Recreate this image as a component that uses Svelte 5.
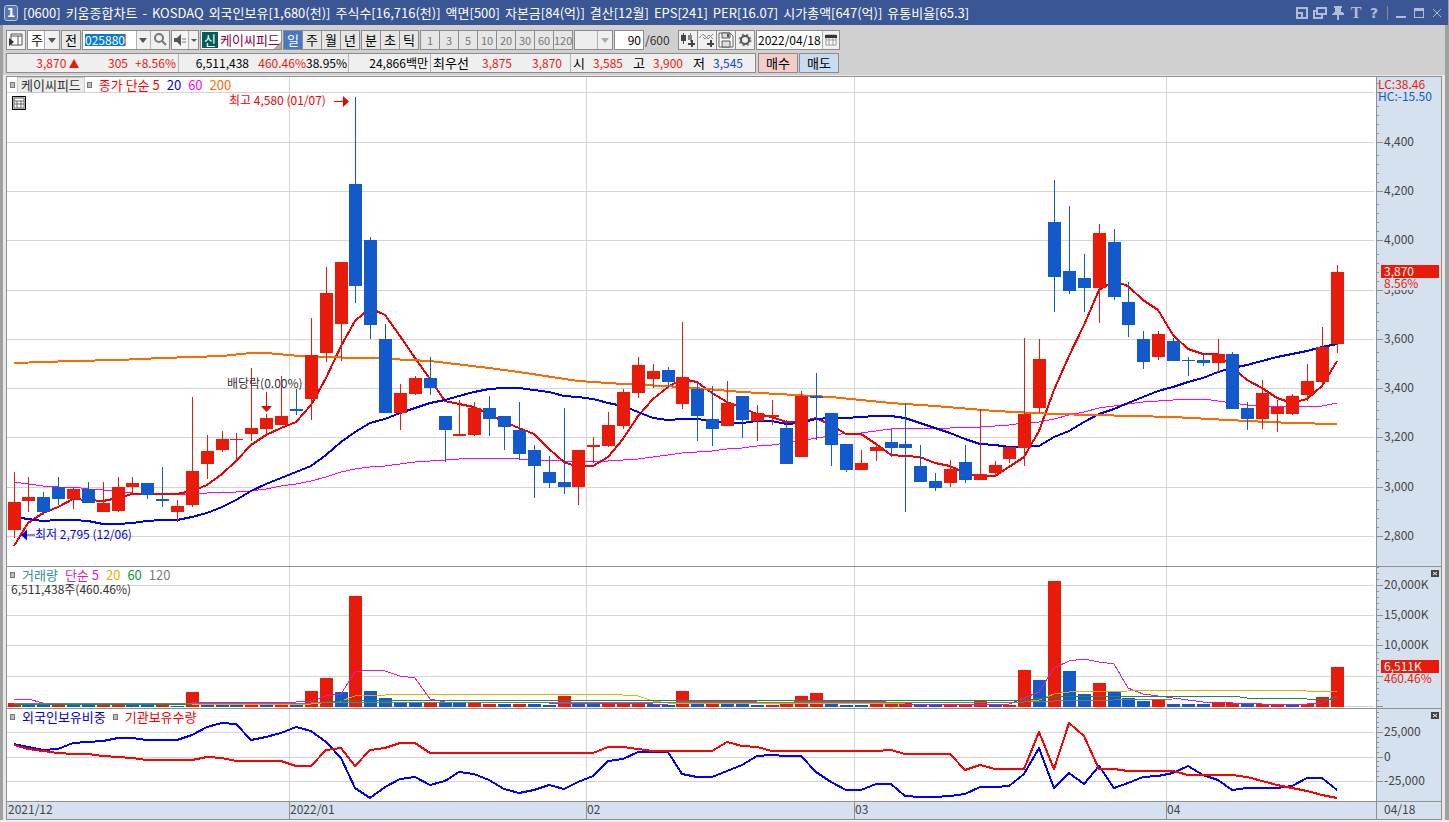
<script lang="ts">
  type Point = number | [number, number]

  const titleParts = [
    '[0600]', '키움종합차트', '-', 'KOSDAQ', '외국인보유[1,680(천)]', '주식수[16,716(천)]', '액면[500]',
    '자본금[84(억)]', '결산[12월]', 'EPS[241]', 'PER[16.07]', '시가총액[647(억)]', '유통비율[65.3]'
  ]
  const periods = ['일', '주', '월', '년']
  const units = ['분', '초', '틱']
  const minutes = ['1', '3', '5', '10', '20', '30', '60', '120']

  let period = $state('일')
  let code = $state('025880')
  let count = $state('90')
  let date = $state('2022/04/18')
  let width = $state(1369)

  // 봉 데이터: 상승 여부, 고가, 몸통 위, 몸통 아래, 저가, 거래량 막대 위, 거래량 상승 여부
  const candles = [
    [1, 472, 502, 530, 538, 703, 1], [1, 477, 497, 501, 512, 705, 0], [0, 492, 497, 512, 515, 705, 0],
    [0, 477, 487, 499, 505, 704, 1], [1, 487, 489, 499, 509, 705, 0], [0, 482, 489, 503, 503, 705, 0],
    [1, 482, 503, 512, 512, 705, 1], [1, 477, 487, 511, 512, 704, 1], [1, 477, 483, 487, 493, 705, 0],
    [0, 483, 483, 495, 499, 705, 0], [0, 467, 499, 501, 507, 705, 1], [1, 500, 506, 512, 522, 706, 0],
    [1, 397, 471, 505, 507, 692, 1], [1, 435, 451, 464, 479, 704, 0], [1, 431, 439, 450, 452, 705, 0],
    [1, 433, 439, 440, 461, 705, 0], [1, 368, 428, 434, 441, 703, 1], [1, 414, 418, 429, 435, 705, 0],
    [1, 376, 416, 425, 425, 705, 1], [0, 389, 409, 411, 415, 705, 0], [1, 318, 355, 399, 420, 691, 1],
    [1, 267, 293, 353, 362, 678, 1], [1, 262, 262, 324, 361, 692, 0], [0, 97, 184, 286, 303, 596, 1],
    [0, 237, 240, 325, 339, 691, 0], [0, 324, 339, 413, 413, 698, 0], [1, 384, 393, 413, 430, 702, 0],
    [1, 376, 378, 394, 395, 703, 0], [0, 357, 378, 388, 395, 702, 1], [0, 416, 416, 430, 462, 703, 0],
    [1, 400, 434, 436, 436, 703, 0], [1, 402, 408, 435, 436, 703, 1], [0, 396, 408, 419, 436, 704, 1],
    [0, 416, 416, 427, 450, 704, 0], [0, 402, 430, 454, 460, 704, 1], [0, 445, 450, 466, 498, 704, 0],
    [0, 456, 472, 483, 488, 705, 0], [0, 408, 482, 487, 494, 696, 1], [1, 450, 450, 487, 505, 704, 0],
    [1, 437, 445, 447, 463, 704, 0], [1, 412, 425, 446, 447, 704, 1], [1, 389, 392, 426, 429, 703, 1],
    [1, 357, 365, 393, 398, 704, 1], [1, 364, 371, 379, 388, 704, 0], [0, 367, 370, 382, 388, 705, 0],
    [1, 322, 377, 404, 409, 691, 1], [0, 383, 389, 416, 441, 703, 0], [0, 386, 419, 429, 446, 703, 1],
    [1, 381, 403, 426, 426, 701, 0], [0, 396, 396, 420, 438, 704, 0], [1, 405, 413, 421, 441, 705, 0],
    [1, 400, 415, 417, 425, 705, 1], [0, 420, 428, 464, 464, 704, 1], [1, 391, 396, 457, 457, 696, 1],
    [0, 373, 396, 398, 440, 693, 1], [0, 413, 413, 445, 466, 703, 0], [0, 444, 444, 470, 472, 705, 0],
    [1, 450, 463, 470, 470, 705, 0], [1, 444, 447, 451, 461, 704, 1], [0, 429, 442, 448, 457, 703, 1],
    [0, 403, 444, 448, 512, 703, 1], [0, 445, 466, 482, 482, 705, 0], [0, 473, 481, 488, 491, 705, 0],
    [1, 460, 469, 483, 487, 704, 1], [0, 445, 462, 480, 483, 705, 1], [1, 409, 474, 480, 480, 701, 1],
    [1, 461, 465, 473, 475, 704, 0], [1, 447, 447, 459, 463, 705, 1], [1, 338, 414, 448, 466, 670, 1],
    [1, 339, 359, 408, 413, 680, 0], [0, 180, 222, 277, 312, 581, 1], [0, 206, 271, 291, 294, 671, 0],
    [0, 254, 278, 288, 312, 694, 0], [1, 224, 233, 288, 323, 683, 1], [0, 229, 242, 297, 300, 692, 0],
    [0, 282, 302, 325, 337, 698, 0], [0, 331, 339, 362, 369, 701, 0], [1, 331, 334, 357, 360, 699, 1],
    [0, 338, 341, 361, 361, 704, 0], [0, 357, 360, 361, 376, 704, 0], [0, 354, 360, 363, 366, 704, 0],
    [1, 339, 354, 363, 372, 703, 1], [0, 352, 354, 409, 409, 703, 1], [0, 402, 408, 419, 430, 704, 0],
    [1, 380, 393, 419, 429, 704, 1], [1, 400, 407, 414, 432, 704, 1], [1, 394, 396, 414, 415, 704, 0],
    [1, 364, 381, 395, 401, 704, 1], [1, 327, 347, 382, 385, 697, 1], [1, 265, 272, 344, 353, 667, 1]
  ]

  // 이동평균선
  const ma5: Point[] = [
    546, 523, 513, 507, 499, 500, 501, 498, 494, 494, 494, 494, 491, 485, 474, 461, 445, 435, 428, 422,
    405, 378, 346, 321, 308, 315, 336, 358, 379, 401, 404, 407, 414, 422, 428, 434, 449, 462, 467, 466,
    457, 439, 416, 399, 387, 379, 382, 393, 402, 408, 414, 417, 422, 422, 418, 425, 434, 434, 444, 455,
    456, 457, 463, 466, 473, 477, 476, 467, 457, 431, 390, 356, 325, 290, 281, 286, 300, 310, 335, 349,
    354, 354, 367, 380, 388, 398, 403, 399, 386, 361
  ]
  const ma20: Point[] = [
    517, 519, 521, 520, 520, 521, 524, 524, 523, 521, 520, 520, 517, 513, 507, 500, 491, 484, 478, 472,
    466, 455, 442, 432, 423, 419, 413, 408, 403, 400, 396, 392, 389, 388, 388, 390, 392, 396, 397, 399,
    403, 406, 412, 418, 420, 419, 419, 421, 423, 423, 421, 421, 424, 423, 419, 418, 418, 417, 416, 416,
    418, 423, 428, 433, 439, 444, 445, 447, 447, 446, 437, 431, 422, 414, 409, 403, 397, 391, 387, 382,
    378, 372, 368, 365, 361, 357, 354, 351, 347, 344
  ]
  const ma60: Point[] = [
    482, 484, 486, 487, 487, 489, 490, 491, 493, 493, 494, 494, 494, 493, 492, 492, 491, 489, 486, 484,
    481, 477, 472, 469, 467, 466, 464, 462, 461, 460, 459, 458, 458, 458, 459, 460, 460, 461, 461, 461,
    461, 460, 459, 457, 455, 453, 452, 451, 449, 448, 446, 445, 443, 441, 438, 436, 433, 433, 431, 429,
    428, 428, 428, 428, 427, 427, 426, 425, 423, 422, 419, 415, 412, 408, 406, 404, 402, 401, 400, 399,
    399, 401, 403, 405, 406, 406, 406, 406, 406, 403
  ]
  const ma200: Point[] = [
    [0, 363], [4, 361], [7, 360], [10, 358], [14, 356], [16, 353], [17, 353], [20, 357], [24, 358],
    [28, 361], [32, 368], [34, 372], [38, 381], [41, 384], [45, 387], [49, 392], [55, 397], [59, 403],
    [62, 406], [66, 411], [70, 414], [78, 417], [83, 421], [86, 423], [89, 424]
  ]

  const vol5: Point[] = [
    [0, 699], [1, 699], [2, 703], [4, 704], [11, 705], [12, 703], [13, 702], [19, 702], [20, 701],
    [21, 696], [22, 694], [23, 672], [24, 670], [25, 671], [26, 676], [27, 678], [28, 699], [29, 702],
    [36, 703], [43, 704], [44, 704], [45, 701], [49, 701], [51, 703], [54, 701], [58, 701], [60, 704],
    [67, 704], [68, 698], [69, 692], [70, 668], [71, 661], [72, 659], [73, 662], [74, 664], [75, 688],
    [76, 694], [77, 696], [78, 698], [80, 702], [84, 704], [87, 704], [88, 703], [89, 696]
  ]
  const vol20: Point[] = [
    [0, 704], [20, 704], [22, 701], [23, 696], [25, 695], [27, 694], [40, 694], [42, 696], [43, 701],
    [44, 703], [60, 703], [68, 702], [69, 700], [70, 694], [71, 692], [75, 691], [78, 690], [86, 690],
    [88, 692], [89, 691]
  ]
  const vol60: Point[] = [
    [0, 704], [12, 704], [20, 703], [23, 700], [45, 700], [68, 700], [70, 697], [71, 696], [82, 696],
    [83, 698], [86, 698], [87, 699], [89, 699]
  ]
  const vol120: Point[] = [
    [0, 703], [20, 703], [22, 702], [40, 702], [68, 702], [70, 701], [74, 700], [78, 699], [89, 699]
  ]

  const foreign: Point[] = [
    744, 747, 750, 749, 743, 742, 741, 738, 738, 740, 740, 740, 735, 727, 723, 724, 740, 737, 733, 727,
    731, 742, 758, 788, 798, 787, 779, 777, 785, 781, 772, 774, 780, 789, 793, 790, 785, 789, 782, 776,
    761, 759, 752, 752, 752, 774, 777, 777, 771, 765, 756, 755, 756, 756, 772, 782, 790, 790, 784, 784,
    796, 797, 797, 796, 794, 787, 787, 786, 774, 748, 788, 773, 784, 766, 788, 783, 777, 776, 773, 766,
    775, 780, 790, 788, 788, 788, 786, 778, 778, 790
  ]
  const institution: Point[] = [
    745, 749, 751, 753, 754, 754, 756, 757, 758, 760, 760, 760, 760, 757, 758, 761, 761, 761, 761, 766,
    766, 750, 748, 766, 750, 748, 743, 743, 753, 753, 753, 753, 753, 753, 753, 753, 753, 753, 753, 753,
    747, 747, 749, 751, 751, 751, 751, 751, 742, 746, 747, 751, 751, 751, 751, 751, 751, 751, 751, 750,
    754, 754, 754, 754, 770, 765, 769, 769, 769, 732, 769, 723, 736, 769, 769, 771, 771, 771, 771, 775,
    775, 775, 775, 777, 781, 785, 788, 791, 795, 798
  ]

  const months = [
    { index: 19, label: '2022/01' },
    { index: 39, label: '02' },
    { index: 57, label: '03' },
    { index: 78, label: '04' }
  ]
  const priceTicks = [
    { y: 92, label: '' }, { y: 142, label: '4,400' }, { y: 191, label: '4,200' }, { y: 240, label: '4,000' },
    { y: 290, label: '3,800' }, { y: 339, label: '3,600' }, { y: 388, label: '3,400' },
    { y: 437, label: '3,200' }, { y: 487, label: '3,000' }, { y: 536, label: '2,800' }
  ]
  const volumeTicks = [
    { y: 585, label: '20,000K' }, { y: 615, label: '15,000K' }, { y: 645, label: '10,000K' },
    { y: 676, label: '' }, { y: 706, label: '' }
  ]
  const holdTicks = [
    { y: 732, label: '25,000' }, { y: 757, label: '0' }, { y: 781, label: '-25,000' }
  ]

  // 봉 중심의 x 좌표
  function px(i: number): number {
    return 7 + Math.floor((i * (width - 46)) / 89)
  }

  function line(points: Point[]): string {
    return points
      .map((p, i) => (typeof p === 'number' ? `${px(i)},${p}` : `${px(p[0])},${p[1]}`))
      .join(' ')
  }
</script>

{#snippet grid(ticks, top, bottom)}
  <g class="grid">
    {#each ticks as tick}
      <rect x="0" y={tick.y} width={width - 2} height="1" />
    {/each}
    {#each months as month}
      <rect x={px(month.index) - 7} y={top} width="1" height={bottom - top} />
    {/each}
  </g>
{/snippet}

{#snippet axis(ticks, minor, step)}
  {#each ticks as tick}
    <rect class="tick" x="0" y={tick.y} width="6" height="1" />
    {#each minor as k}
      <rect class="tick" x="0" y={tick.y - k * step} width="2" height="1" />
    {/each}
    {#if tick.label}
      <text x="7" y={tick.y + 4}>{tick.label}</text>
    {/if}
  {/each}
{/snippet}

<div class="window">
  <header class="titlebar">
    <span class="badge">1</span>
    <h1>
      {#each titleParts as part}<span>{part}</span>{/each}
    </h1>
    <nav>
      <button aria-label="크기">
        <svg width="12" height="12"><path d="M1 6V1h10v10H6M1 6h5v5H1z" /></svg>
      </button>
      <button aria-label="새 창">
        <svg width="14" height="12"><path d="M4 1h9v6H4zM3 4H1v7h8V8" /></svg>
      </button>
      <button aria-label="고정">
        <svg width="12" height="14"><path class="solid" d="M2 0h8v2H9v4h1l2 2v1H7v5H5V9H0V8l2-2h1V2H2z" /></svg>
      </button>
      <button class="letter">T</button>
      <button class="help">?</button>
      <i></i>
      <button aria-label="최소화">
        <svg width="10" height="12"><path class="solid" d="M0 9h10v2H0z" /></svg>
      </button>
      <button aria-label="최대화">
        <svg width="10" height="12"><path class="solid" d="M0 1h10v10H0zM1 4v6h8V4z" fill-rule="evenodd" /></svg>
      </button>
      <button aria-label="닫기">
        <svg width="10" height="12"><path class="thin" d="M1 2l8 8M9 2l-8 8" /></svg>
      </button>
    </nav>
  </header>

  <div class="toolbar">
    <div class="tools">
      <button class="box icon" aria-label="메뉴">
        <svg width="14" height="14"><path d="M2 1h11v11H2zM2 3h11M9 3v9" fill="#fff" stroke="#555" /><path d="M0 5v8l5-4z" fill="#333" /></svg>
      </button>
      <div class="box pick">
        <select aria-label="종목 구분"><option>주</option></select>
        <span class="arrow"></span>
      </div>
      <button class="box flat">전</button>
      <div class="box code">
        <input aria-label="종목코드" bind:value={code} />
        <button class="arrow" aria-label="최근 종목"></button>
        <button class="icon" aria-label="검색">
          <svg width="14" height="14"><circle cx="6" cy="5" r="4" fill="none" stroke="#777" stroke-width="2" /><path d="M9 8l4 4" stroke="#777" stroke-width="2" /></svg>
        </button>
      </div>
      <div class="box sound">
        <button class="icon" aria-label="소리">
          <svg width="14" height="14"><path d="M1 5h3l4-4v12L4 9H1z" fill="#555" /><path d="M10 5v5M12 5v5" stroke="#777" stroke-dasharray="2 1" /></svg>
        </button>
        <button class="arrow small" aria-label="소리 설정"></button>
      </div>
      <div class="box stock"><b>신</b><span>케이씨피드</span></div>
      <div class="group">
        {#each periods as p}
          <button class:active={period === p} onclick={() => (period = p)}>{p}</button>
        {/each}
      </div>
      <div class="group">
        {#each units as u}
          <button class:active={period === u} onclick={() => (period = u)}>{u}</button>
        {/each}
      </div>
      <div class="group muted">
        {#each minutes as m}
          <button>{m}</button>
        {/each}
      </div>
      <div class="box custom">
        <select aria-label="주기" disabled><option></option></select>
        <span class="arrow"></span>
      </div>
      <label class="count"><input class="box" bind:value={count} />/600</label>
      <div class="group icons">
        <button aria-label="지표 추가">
          <svg width="16" height="16"><path d="M1 3h5v6H1zM3 1h1v11H3z" fill="#444" /><path d="M8 3h4v5H8zM10 1h1v9h-1z" fill="#888" /><path d="M12 8v7M8 12h7" stroke="#444" stroke-width="2" /></svg>
        </button>
        <button aria-label="보조선 추가">
          <svg width="16" height="16"><path d="M0 6l4-4 5 5 5-5M4 5l2 2 4-4 4 4" fill="none" stroke="#888" /><path d="M12 8v7M8 12h7" stroke="#444" stroke-width="2" /></svg>
        </button>
        <button aria-label="저장">
          <svg width="16" height="16"><path d="M1 1h11l3 3v11H1z" fill="#fff" stroke="#666" /><path d="M4 1h8v5H4zM4 9h8v6H4z" fill="#ddd" stroke="#555" /><path d="M10 2v3" stroke="#555" stroke-width="2" /></svg>
        </button>
        <button aria-label="설정">
          <svg width="16" height="16"><circle cx="8" cy="8" r="5" fill="none" stroke="#888" stroke-width="3" stroke-dasharray="2 2" /><circle cx="8" cy="8" r="4" fill="none" stroke="#555" stroke-width="2" /></svg>
        </button>
      </div>
      <div class="box date">
        <input aria-label="날짜" bind:value={date} />
        <button class="icon" aria-label="달력">
          <svg width="12" height="12"><path d="M1 1h10v10H1zM1 6h10M4 3v8M8 3v8" fill="#fff" stroke="#999" /><path d="M0 1h12v3H0z" fill="#333" /></svg>
        </button>
      </div>
    </div>

    <div class="quote">
      <div class="prices">
        <span class="up w72">3,870 <svg width="10" height="9"><path d="M5 0l5 9H0z" fill="#e81a0a" /></svg></span>
        <span class="up w49">305</span>
        <span class="up w51 bar">+8.56%</span>
        <span class="w70">6,511,438</span>
        <span class="up w57">460.46%</span>
        <span class="w43 bar">38.95%</span>
        <span class="w82 bar">24,866백만</span>
        <span class="label w38">최우선</span>
        <span class="up w43">3,875</span>
        <span class="up w59 bar wide">3,870</span>
        <span class="label w14">시</span>
        <span class="up w38">3,585</span>
        <span class="label w22">고</span>
        <span class="up w38">3,900</span>
        <span class="label w22">저</span>
        <span class="down w38">3,545</span>
      </div>
      <button class="buy">매수</button>
      <button class="sell">매도</button>
    </div>
  </div>

  <main class="chart">
    <section class="panel">
      <div class="plot" bind:clientWidth={width}>
        <svg {width} height="489" viewBox="0 77 {width} 489">
          {@render grid(priceTicks, 77, 566)}
          <polyline points={line(ma60)} stroke="#f0f" />
          <polyline points={line(ma5)} stroke="#f20000" stroke-width="2" />
          <polyline points={line(ma20)} stroke="#0000e6" stroke-width="2" />
          <polyline points={line(ma200)} stroke="#ff6a00" stroke-width="2" />
          {#each candles as [up, high, top, bottom, low], i}
            <g fill={up ? '#e81a0a' : '#125acb'}>
              <rect x={px(i)} y={high} width="1" height={low - high} />
              <rect x={px(i) - 6} y={top} width="13" height={bottom - top} />
            </g>
          {/each}
          <g fill="#f20000">
            <text x={px(23) - 126} y="105">최고 4,580 (01/07)</text>
            <path d="M{px(23) - 21} 101h9v-5l6 5.500-6 5.500v-5h-9z" />
            <path d="M{px(17)} 392h1v14h5l-5.500 6-5.500-6h5z" />
          </g>
          <text x={px(17) - 39} y="388" fill="#333">배당락(0.00%)</text>
          <g fill="#0000e6">
            <path d="M{px(0) + 7} 535l6-5.500v5h8v1h-8v5z" />
            <text x={px(0) + 21} y="539">최저 2,795 (12/06)</text>
          </g>
        </svg>
        <div class="legend">
          <i></i><span class="name">케이씨피드</span><i></i>
          <span class="ma5">종가 단순 5</span><span class="ma20">20</span><span class="ma60">60</span><span class="ma200">200</span>
        </div>
        <button class="sheet" aria-label="데이터 표">
          <svg width="12" height="12"><path d="M1 1h10v10H1zM1 4h10M1 7h10M4 4v7M8 4v7" fill="#fff" stroke="#666" /></svg>
        </button>
      </div>
      <svg class="axis" width="64" height="489" viewBox="0 77 64 489">
        {@render axis(priceTicks, [1, 2, 3, 4], 9)}
        <text class="up" x="1" y="89">LC:38.46</text>
        <text class="down" x="1" y="101">HC:-15.50</text>
        <rect x="7" y="278" width="56" height="12" fill="#d6e1ef" />
        <rect x="4" y="265" width="58" height="13" fill="#e81a0a" />
        <text class="now" x="7" y="276">3,870</text>
        <text class="up" x="7" y="288">8.56%</text>
      </svg>
    </section>

    <section class="panel">
      <div class="plot">
        <svg {width} height="141" viewBox="0 567 {width} 141">
          {@render grid(volumeTicks, 567, 708)}
          {#each candles as candle, i}
            <rect x={px(i) - 6} y={candle[5]} width="13" height={707 - candle[5]} fill={candle[6] ? '#e81a0a' : '#125acb'} />
          {/each}
          <polyline points={line(vol5)} stroke="#dc1eb4" />
          <polyline points={line(vol20)} stroke="#f0aa00" />
          <polyline points={line(vol60)} stroke="#0a963c" />
          <polyline points={line(vol120)} stroke="#787878" />
        </svg>
        <div class="legend">
          <i></i><span class="volume">거래량</span><span class="vol5">단순 5</span><span class="vol20">20</span><span class="vol60">60</span><span class="vol120">120</span>
          <p>6,511,438주(460.46%)</p>
        </div>
      </div>
      <svg class="axis" width="64" height="141" viewBox="0 567 64 141">
        {@render axis(volumeTicks, [1, 2, 3, 4], 6)}
        <rect x="4" y="660" width="58" height="13" fill="#e81a0a" />
        <text class="now" x="7" y="671">6,511K</text>
        <text class="up" x="7" y="683">460.46%</text>
        <path d="M54 570h8v7h-8z" fill="#444" /><path d="M56 572l4 3M60 572l-4 3" stroke="#fff" />
      </svg>
    </section>

    <section class="panel">
      <div class="plot">
        <svg {width} height="92" viewBox="0 709 {width} 92">
          {@render grid(holdTicks, 709, 801)}
          <polyline points={line(foreign)} stroke="#00f" stroke-width="2" />
          <polyline points={line(institution)} stroke="#f00" stroke-width="2" />
        </svg>
        <div class="legend">
          <i></i><span class="foreign">외국인보유비중</span><i></i><span class="inst">기관보유수량</span>
        </div>
      </div>
      <svg class="axis" width="64" height="92" viewBox="0 709 64 92">
        {@render axis(holdTicks, [1, 2, 3, 4], 5)}
        <path d="M54 712h8v7h-8z" fill="#444" /><path d="M56 714l4 3M60 714l-4 3" stroke="#fff" />
      </svg>
    </section>

    <section class="panel dates">
      <div class="plot">
        <svg {width} height="17">
          <text x="1" y="12">2021/12</text>
          {#each months as month}
            <rect class="tick" x={px(month.index) - 7} y="0" width="1" height="17" />
            <text x={px(month.index) - 6} y="12">{month.label}</text>
          {/each}
        </svg>
      </div>
      <svg class="axis" width="64" height="17"><text x="7" y="12">04/18</text></svg>
    </section>
  </main>
</div>

<style>
  :global(body) {
    margin: 0;
    background: #efefef;
  }

  .window {
    border: 0 solid #a0a0a0;
    border-left-width: 3px;
    border-right-width: 4px;
    background: #e8e8e8;
    font-family: 'Noto Sans CJK KR', sans-serif;
    font-size: 13px;
    line-height: 16px;
    color: #000;
  }

  button,
  input,
  select {
    box-sizing: border-box;
    margin: 0;
    padding: 0;
    border: 0;
    border-radius: 0;
    background: none;
    color: inherit;
    font: inherit;
    appearance: none;
  }

  input {
    font-size: 12px;
  }

  svg {
    display: block;
  }

  .titlebar {
    display: flex;
    align-items: center;
    height: 25px;
    margin: 0 -3px;
    padding: 0 2px 0 4px;
    background: #3a5694;
    color: #fff;
  }

  .badge {
    width: 12px;
    height: 14px;
    border: 1px solid #b8c6e4;
    border-radius: 3px;
    background: #5a74ae;
    font: bold 12px/14px 'DejaVu Sans', sans-serif;
    text-align: center;
  }

  h1 {
    display: flex;
    flex: 1;
    gap: 5px;
    margin: 0 0 0 5px;
    font-size: 13px;
    font-weight: normal;
    white-space: nowrap;
  }

  nav {
    display: flex;
    align-items: center;
    color: #b0bdd8;
  }

  nav button {
    display: grid;
    place-items: center;
    width: 18px;
    height: 20px;
  }

  nav path {
    fill: none;
    stroke: #b0bdd8;
    stroke-width: 2;
    shape-rendering: crispEdges;
  }

  nav .thin {
    stroke-width: 1;
    shape-rendering: auto;
  }

  nav .solid {
    fill: #b0bdd8;
    stroke: none;
  }

  nav i {
    width: 1px;
    height: 14px;
    margin: 0 4px;
    background: #8a8a8a;
  }

  .letter {
    font: bold 16px/16px 'Liberation Serif', serif;
  }

  .help {
    font: bold 14px/16px 'DejaVu Sans', sans-serif;
  }

  .toolbar {
    display: grid;
    gap: 3px;
    padding: 5px 3px 2px;
    background: #d0d0d0;
  }

  .tools,
  .quote {
    display: flex;
    gap: 1px;
  }

  .box {
    box-sizing: border-box;
    display: flex;
    height: 20px;
    border: 1px solid #8c8c8c;
    background: #f4f4f4;
  }

  .icon {
    display: grid;
    place-items: center;
    width: 20px;
  }

  .arrow {
    display: grid;
    place-items: center;
    width: 14px;
    border-left: 1px solid #b0b0b0;
    background: #f0f0f0;
  }

  .arrow::after {
    content: '';
    border: 4px solid transparent;
    border-top: 5px solid #555;
    border-bottom: 0;
  }

  .small {
    width: 10px;
  }

  .small::after {
    border-width: 3px;
    border-top-width: 3px;
  }

  .pick {
    width: 33px;
  }

  .pick select {
    flex: 1;
    padding-left: 3px;
    background: #fff;
  }

  .flat {
    display: block;
    width: 20px;
    background: #e8e8e8;
  }

  .code {
    width: 88px;
    background: #fff;
  }

  .code input {
    width: 53px;
    padding-left: 2px;
    color: #fff;
    background: linear-gradient(90deg, transparent 2px, #0a78d7 2px, #0a78d7 42px, #ff8c28 42px, #ff8c28 43px, transparent 43px) 0 3px / 100% 12px no-repeat;
  }

  .code .icon {
    border-left: 1px solid #b0b0b0;
    background: #f0f0f0;
  }

  .sound {
    width: 28px;
  }

  .sound .icon {
    width: 16px;
  }

  .stock {
    width: 82px;
    background: linear-gradient(135deg, #fff 92%, #aaa 92%);
    color: #820046;
    line-height: 18px;
    white-space: nowrap;
  }

  .stock b {
    width: 16px;
    height: 16px;
    margin: 1px 2px 1px 1px;
    background: #005f5a;
    color: #fff;
    font-weight: normal;
    line-height: 16px;
    text-align: center;
  }

  .group {
    display: flex;
    height: 20px;
    border-left: 1px solid #8c8c8c;
  }

  .group button {
    width: 19px;
    border: 1px solid #8c8c8c;
    border-left: 0;
    background: #e6e6e6;
  }

  .group .active {
    background: #4678c3;
    color: #fff;
  }

  .muted {
    color: #777;
    font-size: 11px;
  }

  .custom {
    width: 39px;
    background: #eee;
  }

  .custom select {
    width: 23px;
  }

  .custom .arrow::after {
    border-top-color: #aaa;
  }

  .count {
    width: 63px;
    color: #333;
    font-size: 12px;
    line-height: 20px;
    white-space: nowrap;
  }

  .count input {
    display: inline-block;
    width: 30px;
    margin-right: 1px;
    padding-right: 2px;
    background: #fff;
    color: #000;
    text-align: right;
    vertical-align: top;
  }

  .icons button {
    display: grid;
    place-items: center;
    background: #f0f0f0;
  }

  .date {
    width: 84px;
    background: #fff;
  }

  .date input {
    flex: 1;
    min-width: 0;
    padding-left: 1px;
  }

  .date .icon {
    width: 17px;
    border-left: 1px solid #b0b0b0;
    background: #f0f0f0;
  }

  .prices {
    box-sizing: border-box;
    display: flex;
    width: 750px;
    height: 20px;
    margin-right: 1px;
    border: 1px solid #8c8c8c;
    background: #efefef;
    font-size: 12px;
    line-height: 18px;
    white-space: nowrap;
  }

  .prices span {
    box-sizing: border-box;
    text-align: right;
  }

  .prices .label {
    font-size: 13px;
  }

  .prices svg {
    display: inline-block;
  }

  .prices .bar {
    padding-right: 2px;
    border-right: 1px solid #b4b4b4;
  }

  .prices .wide {
    padding-right: 8px;
  }

  .up {
    color: #e81a0a;
  }

  .down {
    color: #1446c8;
  }

  .w14 { width: 14px; }
  .w22 { width: 22px; }
  .w38 { width: 38px; }
  .w43 { width: 43px; }
  .w49 { width: 49px; }
  .w51 { width: 51px; }
  .w57 { width: 57px; }
  .w59 { width: 59px; }
  .w70 { width: 70px; }
  .w72 { width: 72px; }
  .w82 { width: 82px; }

  .buy,
  .sell {
    width: 40px;
    height: 20px;
    border: 1px solid #8c8c8c;
    background: #f5cdc8;
  }

  .sell {
    background: #c8dcf0;
  }

  .chart {
    margin: 1px 3px 3px 3px;
    border: 1px solid #909090;
    border-bottom: 0;
    background: #fff;
  }

  .panel {
    display: flex;
    border-bottom: 1px solid #909090;
  }

  .plot {
    position: relative;
    flex: 1;
    min-width: 0;
    overflow-x: clip;
  }

  .plot text,
  .axis text {
    font-size: 12px;
  }

  .plot rect,
  .axis rect {
    shape-rendering: crispEdges;
  }

  .grid {
    fill: #d4d4d4;
  }

  polyline {
    fill: none;
    stroke-linejoin: round;
    shape-rendering: crispEdges;
  }

  .axis {
    flex: none;
    border-left: 1px solid #909090;
    background: #d6e1ef;
    fill: #444;
  }

  .tick {
    fill: #909090;
  }

  .axis .up {
    fill: #e81a0a;
  }

  .axis .down {
    fill: #125acb;
  }

  .axis .now {
    fill: #fff;
  }

  .dates {
    background: #d6e1ef;
    fill: #444;
  }

  .legend {
    position: absolute;
    top: 1px;
    left: 3px;
    display: flex;
    flex-wrap: wrap;
    align-items: center;
    column-gap: 7px;
    line-height: 14px;
  }

  .legend i {
    width: 3px;
    height: 4px;
    border: 1px solid #777;
    background: #bbb;
  }

  .legend p {
    width: 100%;
    margin: 0 0 0 1px;
    color: #333;
    font-size: 12px;
  }

  .name {
    margin: 0 -4px;
    padding: 0 3px;
    outline: 1px solid #c8c8c8;
    background: #ececec;
    color: #333;
  }

  .sheet {
    position: absolute;
    top: 19px;
    left: 5px;
    display: grid;
    place-items: center;
    width: 14px;
    height: 14px;
    border: 1px solid #000;
    background: #ddd;
  }

  .ma5, .inst { color: #f00; }
  .ma20, .foreign { color: #0000e6; }
  .ma60 { color: #f0f; }
  .ma200 { color: #ff6a00; }
  .volume { color: #2d9191; }
  .vol5 { color: #dc1eb4; }
  .vol20 { color: #f0aa00; }
  .vol60 { color: #0a963c; }
  .vol120 { color: #787878; }
</style>
